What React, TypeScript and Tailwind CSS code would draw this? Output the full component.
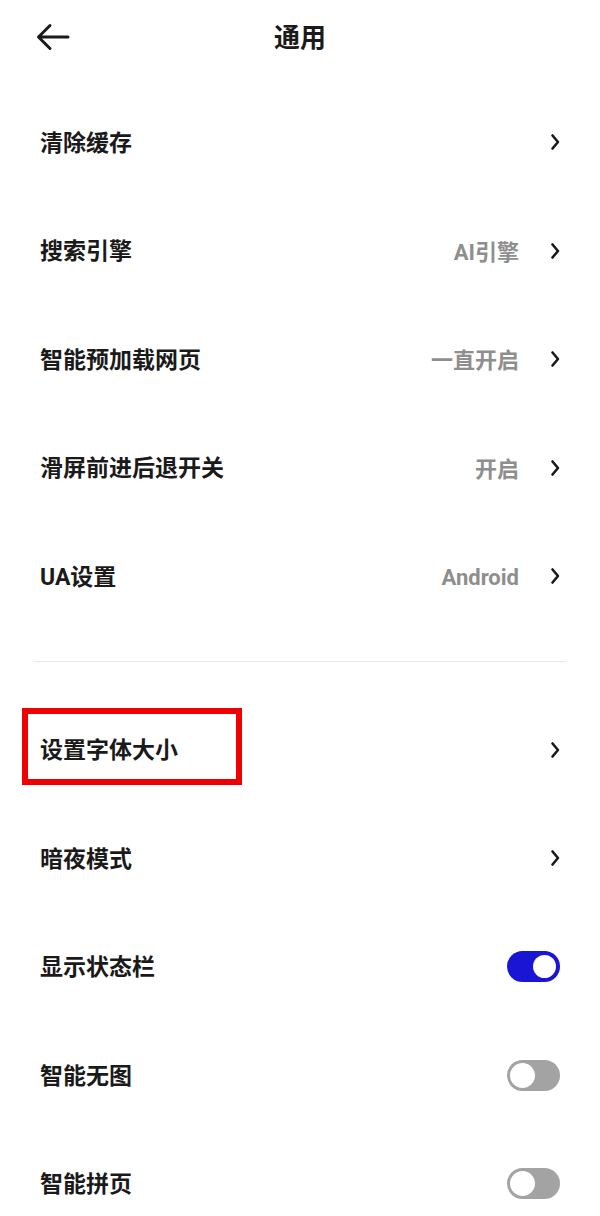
import React from 'react'

type Row =
  | { kind: 'link'; label: string; value?: string; marked?: boolean }
  | { kind: 'toggle'; label: string; on: boolean }

const topRows: Row[] = [
  { kind: 'link', label: '清除缓存' },
  { kind: 'link', label: '搜索引擎', value: 'AI引擎' },
  { kind: 'link', label: '智能预加载网页', value: '一直开启' },
  { kind: 'link', label: '滑屏前进后退开关', value: '开启' },
  { kind: 'link', label: 'UA设置', value: 'Android' },
]

const bottomRows: Row[] = [
  { kind: 'link', label: '设置字体大小', marked: true },
  { kind: 'link', label: '暗夜模式' },
  { kind: 'toggle', label: '显示状态栏', on: true },
  { kind: 'toggle', label: '智能无图', on: false },
  { kind: 'toggle', label: '智能拼页', on: false },
]

function Chevron() {
  return (
    <svg width="10" height="18" viewBox="0 0 10 18" fill="none">
      <path d="M2.5 2.5 L8 9 L2.5 15.5" stroke="#1a1a1a" strokeWidth="2.6" strokeLinecap="round" strokeLinejoin="round" />
    </svg>
  )
}

function Toggle({ on }: { on: boolean }) {
  return (
    <div
      className={
        on
          ? 'w-[53px] h-[31px] rounded-full bg-[#1a14d4] flex items-center justify-end pr-[4px]'
          : 'w-[53px] h-[31px] rounded-full bg-[#a3a3a3] flex items-center justify-start pl-[3px]'
      }
    >
      <div className={on ? 'w-[23px] h-[23px] rounded-full bg-white' : 'w-[25px] h-[25px] rounded-full bg-white'} />
    </div>
  )
}

function SettingRow({ row }: { row: Row }) {
  return (
    <div className="relative h-[108.5px] flex items-center justify-between pl-10 pr-10">
      <span className="text-[23px] font-bold text-[#1a1a1a] pt-[3px]">{row.label}</span>
      {row.kind === 'link' ? (
        <div className="flex items-center">
          {row.value && (
            <span className="text-[22px] font-bold text-[#8e8e8e] mr-[31px] pt-[3px]">{row.value}</span>
          )}
          <Chevron />
        </div>
      ) : (
        <Toggle on={row.on} />
      )}
      {row.kind === 'link' && row.marked && (
        <div className="absolute left-[22px] top-[12px] w-[220px] h-[77px] border-[6px] border-[#f00000]" />
      )}
    </div>
  )
}

export default function App() {
  return (
    <div
      className="w-[600px] h-[1216px] bg-white overflow-hidden"
      style={{ fontFamily: 'Roboto, "Noto Sans CJK SC", sans-serif' }}
    >
      <div className="relative h-[76px] flex items-center justify-center">
        <svg className="absolute left-[36px] top-[22px]" width="34" height="30" viewBox="0 0 34 30" fill="none">
          <path d="M32 15 H3 M14 3.5 L2.5 15 L14 26.5" stroke="#1a1a1a" strokeWidth="3" strokeLinecap="round" strokeLinejoin="round" />
        </svg>
        <span className="text-[26px] font-bold text-[#1a1a1a]">通用</span>
      </div>

      <div className="mt-3">
        {topRows.map((r) => (
          <SettingRow key={r.label} row={r} />
        ))}
      </div>

      <div className="mx-[34px] mt-[30px] mb-[34px] h-px bg-[#e6e6e6]" />

      <div>
        {bottomRows.map((r) => (
          <SettingRow key={r.label} row={r} />
        ))}
      </div>
    </div>
  )
}
